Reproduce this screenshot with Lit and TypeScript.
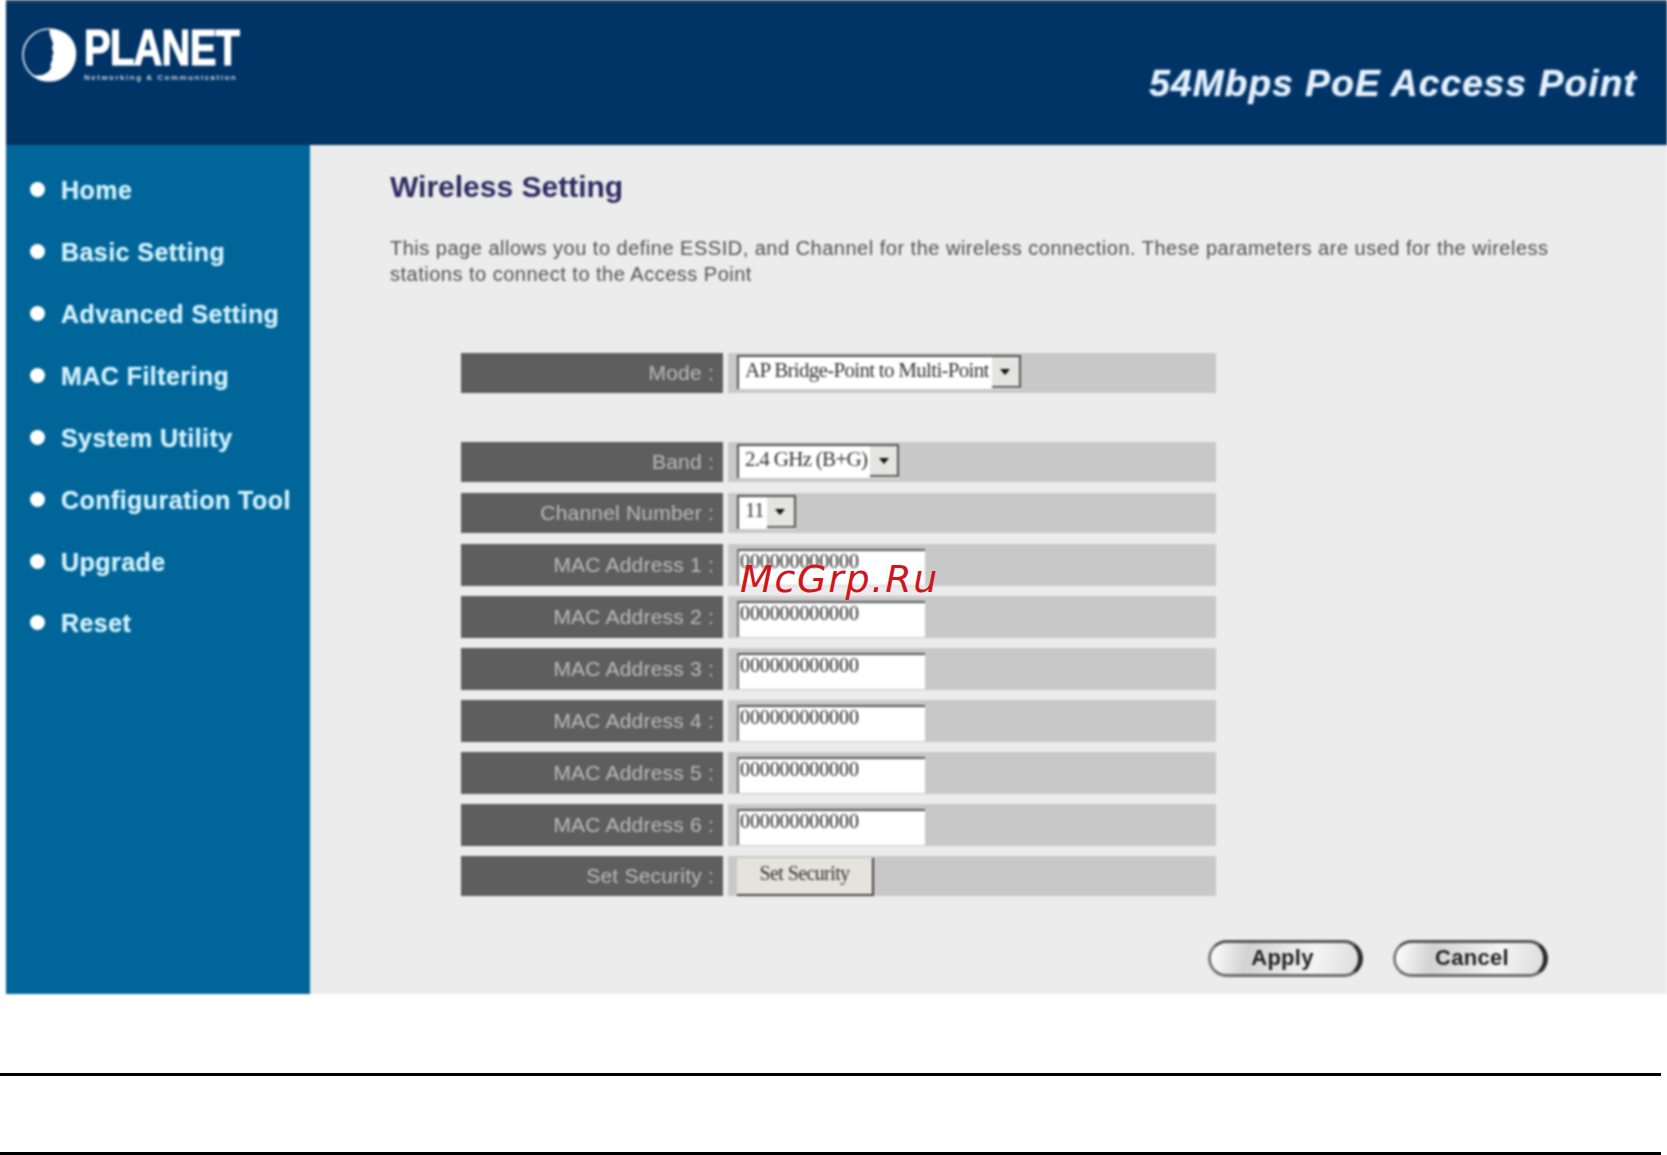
import { LitElement, html, css } from "lit";
import { customElement } from "lit/decorators.js";

const NAV = ["Home", "Basic Setting", "Advanced Setting", "MAC Filtering", "System Utility", "Configuration Tool", "Upgrade", "Reset"];
const MACS = [1, 2, 3, 4, 5, 6];

@customElement("app-root")
export class AppRoot extends LitElement {
  static styles = css`
    :host { display: block; width: 1667px; height: 1155px; overflow: hidden; background: #fff; font-family: "Liberation Sans", Arial, sans-serif; }
    * { box-sizing: border-box; }
    .shell { position: relative; }
    .frame { margin-left: 6px; filter: blur(0.8px); }
    .header { height: 145px; background: #003366; border-top: 3px solid #24405f; display: flex; justify-content: space-between; }
    .logo { display: flex; gap: 4px; padding: 22px 0 0 14px; }
    .logo svg { width: 60px; height: 62px; flex: none; }
    .brand { display: flex; flex-direction: column; color: #fff; }
    .brand b { font-size: 50px; line-height: 46px; letter-spacing: -1px; transform: scaleX(0.8); transform-origin: left center; width: 160px; white-space: nowrap; -webkit-text-stroke: 1.2px #fff; }
    .brand small { font-size: 8px; font-weight: 700; line-height: 10px; color: #c9d6e6; white-space: nowrap; margin-top: 2px; letter-spacing: 1.5px; }
    .product { font-size: 37px; font-weight: 700; font-style: italic; letter-spacing: 1.15px; color: #e6f0fb; padding: 60px 30px 0 0; line-height: 42px; text-shadow: 0 0 2px #8fc0ef; }
    .body { display: flex; height: 849px; }
    .side { width: 304px; flex: none; background: #006699; padding-top: 15px; display: flex; flex-direction: column; }
    .nav { height: 61.86px; display: flex; align-items: center; gap: 16px; padding-left: 24px; color: #d3f1fc; font-size: 25px; font-weight: 700; letter-spacing: 0.45px; white-space: nowrap; }
    .nav i { width: 15px; height: 15px; border-radius: 50%; background: #fff; flex: none; margin-top: -2px; }
    .nav span { text-shadow: 0 0 1px #9fd8f0; }
    .main { flex: 1; background: #ececec; padding: 26px 0 0 80px; display: flex; flex-direction: column; }
    h1 { margin: 0; font-size: 30px; line-height: 32px; font-weight: 700; color: #2e2a62; }
    .intro { margin: 33px 0 0; width: 1175px; font-size: 20px; letter-spacing: 0.5px; line-height: 25.6px; color: #505050; }
    .form { margin: 66px 0 0 71px; width: 755px; display: flex; flex-direction: column; }
    .row { display: grid; grid-template-columns: 262px 1fr; gap: 5px; height: 40px; margin-bottom: 11px; }
    .row.mac { height: 42px; margin-bottom: 10px; }
    .row.gap { margin-bottom: 49px; }
    .label { background: #5e5e5e; color: #bcbcbc; font-size: 21px; letter-spacing: 0.2px; display: flex; align-items: center; justify-content: flex-end; padding-right: 3px; white-space: pre; }
    .value { background: #c8c8c8; padding: 2px 0 0 9px; display: flex; align-items: flex-start; }
    .select { height: 34px; background: #fff; border-top: 2px solid #555; border-left: 2px solid #555; display: flex; align-items: center; justify-content: space-between; font: 21px/26px "Liberation Serif", serif; letter-spacing: -0.7px; color: #333; padding: 0 0 6px 6px; gap: 3px; white-space: nowrap; }
    .arrow { width: 29px; height: 31px; flex: none; background: #e4e4e0; border-right: 2px solid #555; border-bottom: 2px solid #555; display: flex; align-items: center; justify-content: center; align-self: flex-start; }
    .arrow::after { content: ""; border: 5px solid transparent; border-top: 6px solid #111; border-bottom: 0; }
    .input { margin-top: 3px; width: 188px; height: 36px; background: #fff; border: 0; border-top: 2px solid #555; border-left: 2px solid #777; font: 20px/24px "Liberation Serif", serif; color: #222; padding: 0 0 14px 1px; letter-spacing: -0.1px; outline: none; }
    .setbtn { height: 38px; width: 137px; background: #e4e4dc; border: 0; border-right: 2px solid #444; border-bottom: 2px solid #444; font: 20px/24px "Liberation Serif", serif; color: #333; letter-spacing: -0.6px; padding: 0 0 6px; }
    .actions { margin: 33px 0 0 818px; display: flex; gap: 30px; }
    .pill { width: 155px; height: 37px; border-radius: 19px; border: 3px solid #7c7c7c; border-right: 5px solid #2e2e2e; border-top-color: #555; border-bottom-color: #6c6c6c; background: linear-gradient(100deg, #fff, #d2d2d2 25%, #f4f4f4 70%, #ddd); color: #222; font: 700 22px/28px "Liberation Sans", sans-serif; letter-spacing: 0.3px; padding: 0 4px 2px 0; }
    .pill.cancel { padding: 0 0 2px 5px; }
    .rule { height: 3px; width: 1661px; background: #000; }
    .rule.one { margin-top: 79px; }
    .rule.two { margin-top: 76px; }
    .mark { position: absolute; left: 740px; top: 555px; font: oblique 38px/48px "DejaVu Sans", sans-serif; color: #d0161c; letter-spacing: 1.7px; white-space: nowrap; }
  `;

  private renderLogo() {
    return html`<svg viewBox="0 0 60 62" aria-hidden="true">
      <circle cx="29" cy="30" r="26" fill="none" stroke="#dfe8f2" stroke-width="1.6"></circle>
      <path d="M30 4 C50 4 58 20 56 32 C54 48 42 56 30 56 C22 57 14 53 12 50 C22 52 30 48 31 42 C29 38 34 36 32 31 C36 28 30 24 33 20 C33 14 28 10 30 4 Z" fill="#fff"></path>
    </svg>`;
  }

  private renderRow(label: string, body: unknown, cls = "") {
    return html`<div class="row ${cls}"><div class="label">${label} : </div><div class="value">${body}</div></div>`;
  }

  private renderSelect(text: string) {
    return html`<div class="select"><span>${text}</span><span class="arrow"></span></div>`;
  }

  render() {
    return html`<div class="shell">
      <div class="frame">
        <div class="header">
          <div class="logo">
            ${this.renderLogo()}
            <div class="brand"><b>PLANET</b><small>Networking &amp; Communication</small></div>
          </div>
          <div class="product">54Mbps PoE Access Point</div>
        </div>
        <div class="body">
          <nav class="side">${NAV.map((n) => html`<div class="nav"><i></i><span>${n}</span></div>`)}</nav>
          <main class="main">
            <h1>Wireless Setting</h1>
            <p class="intro">This page allows you to define ESSID, and Channel for the wireless connection. These parameters are used for the wireless stations to connect to the Access Point</p>
            <div class="form">
              ${this.renderRow("Mode", this.renderSelect("AP Bridge-Point to Multi-Point"), "gap")}
              ${this.renderRow("Band", this.renderSelect("2.4 GHz (B+G)"))}
              ${this.renderRow("Channel Number", this.renderSelect("11"))}
              ${MACS.map((i) => this.renderRow(`MAC Address ${i}`, html`<input class="input" .value=${"000000000000"} />`, "mac"))}
              ${this.renderRow("Set Security", html`<button class="setbtn">Set Security</button>`)}
            </div>
            <div class="actions"><button class="pill">Apply</button><button class="pill cancel">Cancel</button></div>
          </main>
        </div>
      </div>
      <div class="rule one"></div>
      <div class="rule two"></div>
      <div class="mark">McGrp.Ru</div>
    </div>`;
  }
}
